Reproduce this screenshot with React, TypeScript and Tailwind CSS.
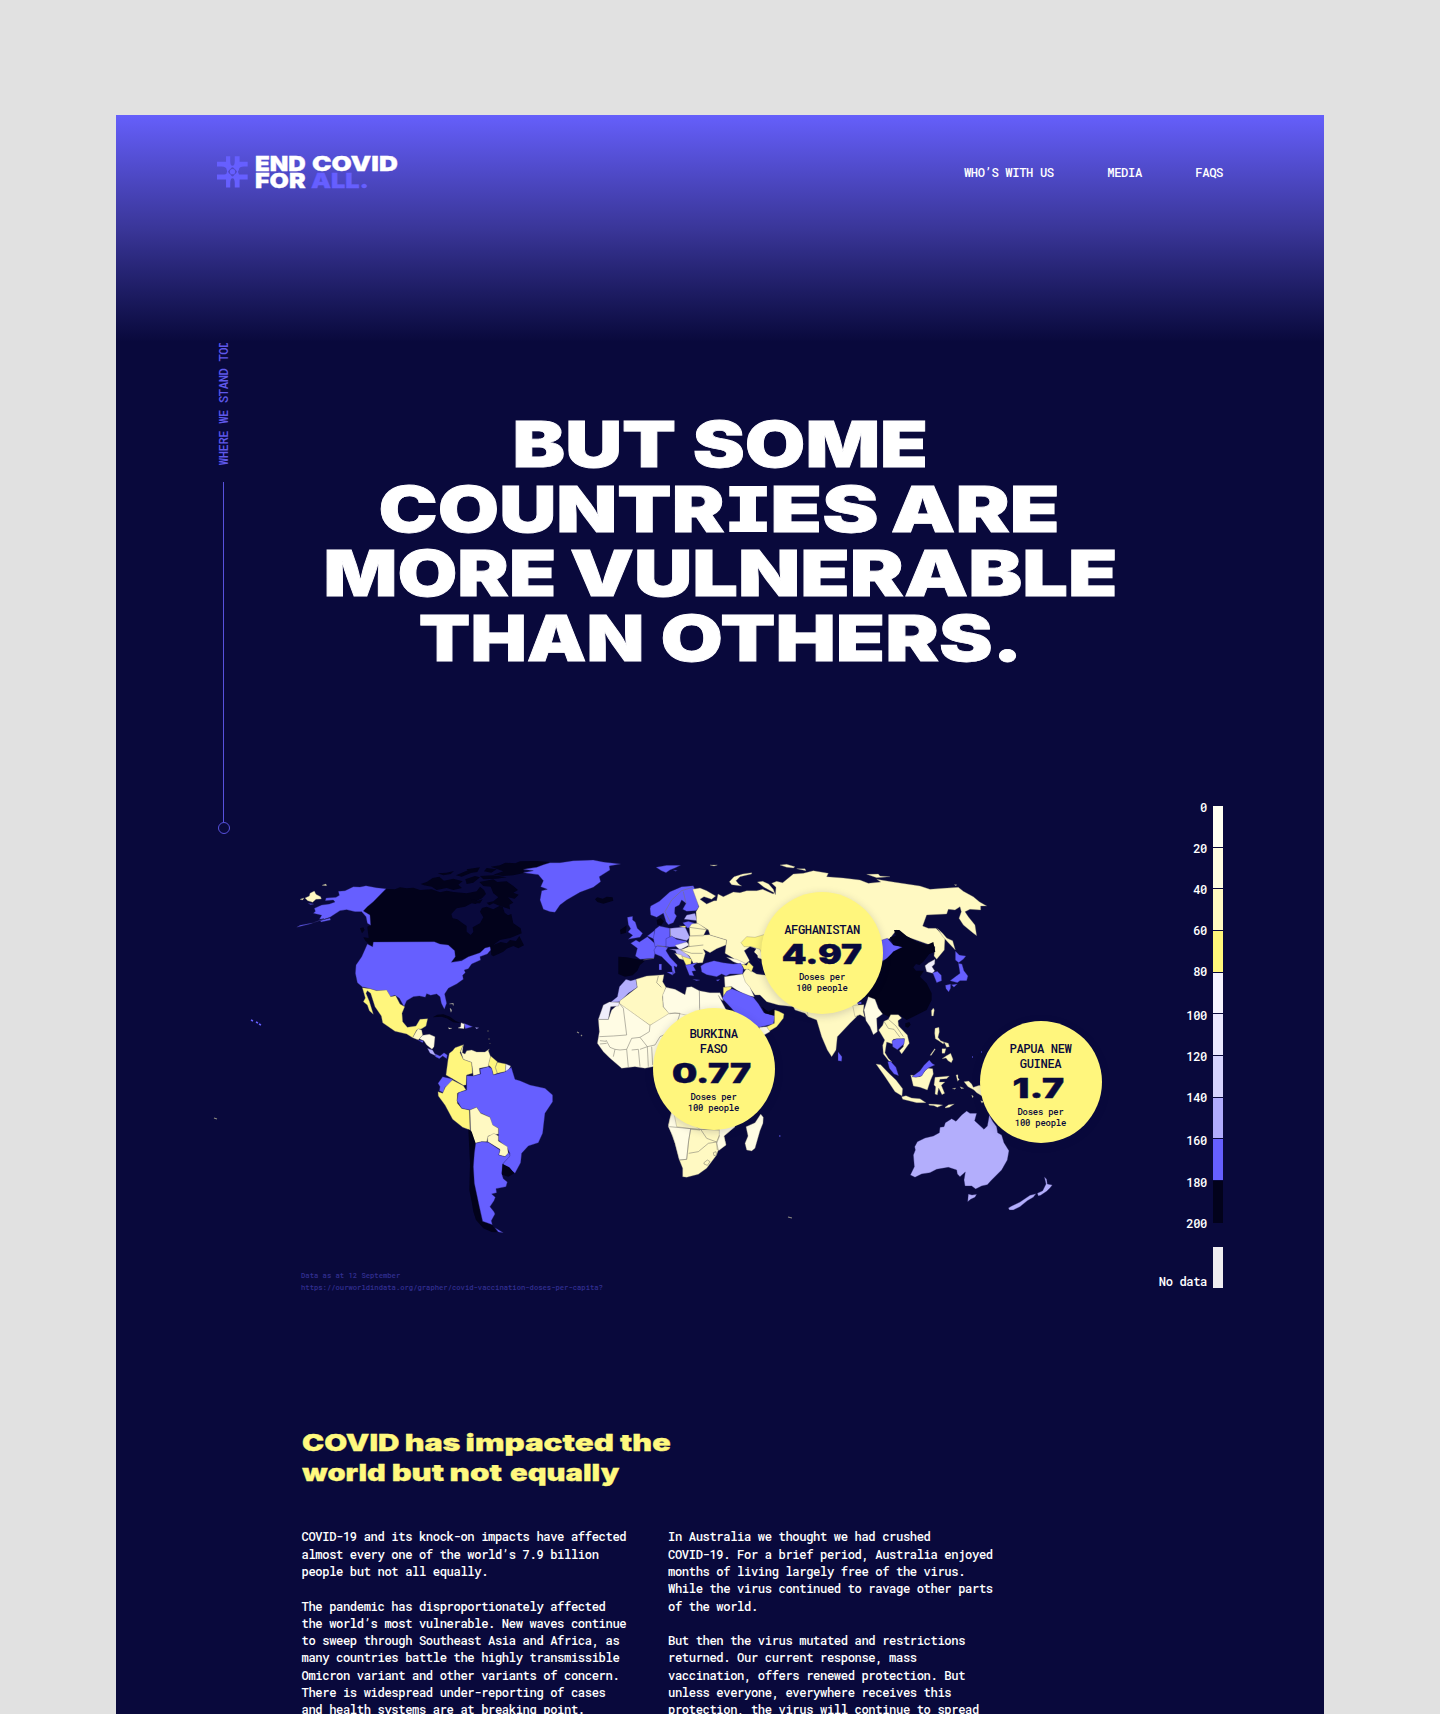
import { useLayoutEffect, useRef } from "react";

const BLUE = "#665fff";
const YELLOW = "#fff67d";
const LIGHT = "#fff9c2";
const PALE = "#fffce4";
const LAV = "#b3aefc";
const MIST = "#efedfb";
const INK = "#02021b";

type Shape = [fill: string, d: string];

/** Stretches its text horizontally so that the ink fills the box width. */
function Fit({ text, className }: { text: string; className: string }) {
  const inner = useRef<HTMLSpanElement>(null);
  useLayoutEffect(() => {
    const el = inner.current;
    if (!el || !el.parentElement) return;
    const ctx = document.createElement("canvas").getContext("2d");
    if (!ctx) return;
    const cs = getComputedStyle(el);
    ctx.font = `${cs.fontWeight} ${cs.fontSize} ${cs.fontFamily}`;
    const m = ctx.measureText(text);
    const ink = m.actualBoundingBoxRight + m.actualBoundingBoxLeft;
    const k = el.parentElement.getBoundingClientRect().width / ink;
    el.style.transform = `translateX(${m.actualBoundingBoxLeft * k}px) scaleX(${k})`;
  }, [text]);
  return (
    <span className={`block shrink-0 text-left whitespace-nowrap ${className}`}>
      <span ref={inner} className="inline-block origin-left">
        {text}
      </span>
    </span>
  );
}

const northAmerica: Shape[] = [
  [INK, "M320 147L345 148L360 142L380 145L400 143L420 150L455 148L480 157L500 152L520 156L560 160L590 154L600 140L612 150L618 162L606 175L585 185L590 192L575 190L555 200L530 205L514 222L518 235L532 238L548 250L560 258L560 275L572 285L580 276L578 262L600 250L610 232L600 215L606 204L620 200L640 208L658 198L668 200L674 218L684 226L694 222L700 250L722 265L725 280L700 290L690 294L660 300L640 315L662 306L680 310L690 300L708 303L718 288L732 316L715 325L700 318L680 326L670 335L640 349L634 345L632 322L615 324L600 337L570 350L514 367L526 350L524 330L505 315L480 312L463 305L280 305L276 320L256 302L250 292L266 294L262 260L272 255L268 225L245 213Z"],
  [INK, "M422 132L440 126L458 114L478 110L492 122L520 116L548 124L535 134L546 144L520 150L500 144L470 150L455 140L432 136Z"],
  [INK, "M598 126L640 118L652 126L680 124L700 138L714 150L700 158L716 164L704 176L684 172L700 188L688 194L690 208L660 198L640 190L628 196L620 188L640 184L655 172L640 160L632 140L610 138Z"],
  [INK, "M632 80L660 76L676 68L706 70L720 64L770 63L810 66L780 80L745 84L730 92L735 98L700 106L668 108L640 104L670 94Z"],
  [INK, "M473 100L500 98L522 93L512 102L490 106Z M528 106L560 92L575 98L545 110Z M560 88L600 82L592 96L566 100Z M556 118L585 108L600 112L580 128L560 132Z M600 108L640 106L680 112L650 116L610 118Z M620 84L650 88L634 98L612 94Z M572 176L592 182L608 178L600 190L580 190Z M240 265L250 262L254 270L246 280Z"],
  [INK, "M458 532L472 524L490 523L510 530L526 542L543 550L520 547L500 535L484 530Z"],
  [BLUE, "M318 146L290 143L258 137L240 141L220 140L195 152L175 154L178 166L168 172L138 174L136 182L160 180L165 186L148 192L125 195L103 205L106 214L100 220L125 226L118 238L132 236L90 252L50 262L60 256L100 248L150 232L165 222L180 212L200 209L225 215L245 215L258 230L262 250L272 256L270 225L250 213L262 200L280 185Z M84 190L102 192L92 194Z M120 242L150 234L152 240L124 246Z"],
  [LIGHT, "M75 174L88 168L90 160L103 153L108 163L122 170L124 177L108 178L98 187L83 182Z M126 136L138 132L140 137Z M60 178L72 174L68 180Z"],
  [BLUE, "M262 312L278 320L280 306L463 305L480 312L505 315L524 332L526 350L514 367L545 362L565 350L600 338L615 324L630 320L632 330L622 342L600 350L602 360L575 372L565 386L553 390L556 398L548 406L550 418L530 432L505 445L494 462L500 490L493 508L484 490L480 470L470 462L452 466L440 461L436 472L418 468L400 470L380 482L372 500L358 475L345 466L330 470L320 452L290 452L262 444L247 441L232 428L226 400L228 375L245 350Z"],
  [YELLOW, "M247 443L270 446L290 452L320 450L332 470L347 467L360 492L374 500L366 520L368 545L382 562L408 558L420 538L443 536L438 558L425 566L410 570L398 593L380 582L345 574L308 548L304 528L285 500L272 460L262 452L258 460L268 484L280 523L268 512L262 495L250 485L256 474Z"],
  [LIGHT, "M398 593L408 575L414 566L425 570L428 585L415 600Z"],
  [PALE, "M418 596L428 586L448 583L465 590L462 620L456 628L440 615L432 603Z"],
  [BLUE, "M413 600L430 602L428 608Z M462 640L480 648L492 638L502 645L500 656L488 648L478 656L466 650Z M552 550L578 560L556 566Z"],
  [LAV, "M442 625L458 630L468 648L450 640Z M585 562L597 563L590 567Z"],
  [PALE, "M534 564L542 560L543 548L553 552L552 566Z M504 563L516 565L508 567Z M508 492L520 490L520 497L518 492Z M510 504L515 510L513 517Z"],
];

const southAmerica: Shape[] = [
  [YELLOW, "M130 44L105 53L98 62L88 70L84 90L78 135L95 145L130 166L138 165L140 135L157 130L155 97L130 88L120 68Z"],
  [LIGHT, "M130 44L122 64L130 88L155 97L160 138L180 132L178 115L205 110L212 80L205 62L208 57L195 66L170 66L155 60L140 62L135 72L127 68Z"],
  [YELLOW, "M212 78L232 95L226 112L232 130L220 135L213 112L205 105Z M232 97L258 102L256 125L232 130L226 112Z"],
  [MIST, "M258 102L272 108L264 125L256 123Z"],
  [BLUE, "M68 140L97 147L94 160L75 172L70 188L58 182L60 170L54 160Z"],
  [YELLOW, "M54 185L68 190L76 172L97 150L130 167L138 180L112 190L112 220L125 235L148 240L150 300L128 292L98 268L75 225L55 198Z"],
  [BLUE, "M140 137L160 138L182 132L180 117L205 110L215 115L220 135L256 125L274 112L285 148L300 152L330 165L375 175L398 195L398 215L375 250L368 310L355 338L325 348L305 370L302 398L285 430L248 402L270 372L262 355L235 330L235 295L215 285L210 262L180 248L170 232L150 240L125 235L111 212L115 188L140 180Z"],
  [LIGHT, "M150 240L170 232L182 250L210 262L218 285L235 295L235 312L205 318L200 335L185 335L165 340L152 300Z"],
  [LIGHT, "M203 320L222 310L235 318L235 333L262 350L265 372L255 380L236 375L240 358L203 335Z"],
  [INK, "M145 298L155 305L167 340L163 440L178 530L186 575L215 583L232 607L215 606L190 595L168 570L160 545L155 515L148 480L150 400Z"],
  [BLUE, "M167 340L185 335L205 337L240 360L236 375L255 380L268 366L270 378L248 402L245 430L250 446L262 456L258 470L228 476L230 488L215 492L226 502L222 512L210 530L222 545L225 552L214 572L217 584L188 574L178 530L163 460L160 410L163 370Z M225 593L250 608L235 606Z"],
  [INK, "M248 402L268 412L283 430L265 440L246 434Z"],
];

const eurasia: Shape[] = [
  [BLUE, "M-110 58L-70 52L-50 44L-30 38L0 38L40 32L100 30L130 36L182 42L148 48L150 60L118 80L122 95L100 112L60 127L20 150L0 165L-15 187L-30 185L-50 178L-60 150L-55 122L-38 118L-58 110L-50 92L-65 74L-110 68L-80 62Z"],
  [INK, "M105 148L112 142L128 146L140 140L158 142L160 152L130 161L112 156Z M180 240L200 226L198 248L182 253Z M290 210L302 204L312 214L304 226L292 224Z"],
  [BLUE, "M288 52L320 46L362 46L345 54L330 60L318 68L304 62Z M340 60L352 62L346 64Z"],
  [BLUE, "M202 202L218 199L218 210L226 216L232 235L248 250L240 262L205 268L218 256L204 246L212 236L205 224Z"],
  [BLUE, "M270 176L272 168L298 154L330 125L365 110L400 107L405 118L412 150L417 172L408 182L380 184L368 178L378 160L365 150L358 165L345 172L344 190L350 198L340 218L325 224L318 215L310 190L290 202L272 195Z"],
  [BLUE, "M228 270L238 276L262 260L290 285L282 325L240 328L226 318L232 295L212 280Z M262 258L285 240L283 268Z"],
  [INK, "M175 320L200 322L255 332L240 345L232 362L218 376L195 380L175 372Z"],
  [BLUE, "M285 238L298 228L330 235L330 265L318 290L285 290L280 265Z"],
  [LAV, "M330 235L375 230L390 262L380 272L330 260Z M380 195L405 190L412 212L372 208Z"],
  [BLUE, "M368 218L385 214L405 220L398 232L382 234Z"],
  [BLUE, "M318 266L335 258L350 268L380 274L375 282L345 290L318 292Z M282 300L290 288L325 290L318 302L330 322L352 345L350 352L342 348L346 368L338 374L335 350L305 320L285 312Z M320 366L342 366L338 376Z M297 342L305 342L305 360L297 360Z"],
  [MIST, "M345 286L380 276L388 285L360 300Z"],
  [LAV, "M328 297L370 298L392 325L380 332L350 312L346 302Z"],
  [LIGHT, "M344 310L365 315L372 330L358 326Z M388 232L395 222L415 219L440 238L430 258L390 258Z M388 258L448 254L500 270L498 285L470 296L450 308L430 298L436 310L428 338L400 340L388 318L362 300L385 290Z"],
  [YELLOW, "M365 318L395 328L392 345L378 345Z M358 228L378 228L375 233Z"],
  [BLUE, "M376 346L412 338L400 348L408 362L396 364L402 378L388 376Z M398 388L420 390L410 392Z M468 390L480 388L474 394Z"],
  [LIGHT, "M398 118L420 114L440 122L467 138L455 148L432 140L420 148L440 162L462 152L470 152L474 132L490 140L520 126L540 128L560 122L590 122L608 118L640 132L642 128L612 112L592 96L608 94L626 102L640 118L646 134L648 112L635 100L650 94L668 98L700 72L730 70L760 62L805 70L800 80L850 84L900 90L925 100L962 96L950 88L1000 96L1080 108L1110 118L1150 115L1195 112L1210 124L1240 140L1258 155L1280 168L1262 168L1262 180L1230 178L1215 185L1225 200L1245 225L1250 257L1238 248L1210 225L1197 205L1204 185L1200 170L1185 180L1165 178L1160 192L1100 195L1088 228L1105 235L1128 235L1155 262L1153 300L1130 328L1122 318L1125 290L1040 260L1010 240L990 265L900 300L640 340L585 320L545 350L520 325L495 310L500 270L450 255L445 240L410 218L408 185L417 170Z"],
  [LIGHT, "M508 95L522 80L548 72L575 68L575 72L540 80L528 92L536 102L545 108L515 104Z M450 45L472 45L462 48Z M660 45L680 43L705 50L700 54L680 52Z M710 56L735 56L738 62Z M920 73L955 72L960 78L990 80L950 83Z M1183 104L1190 104L1188 107Z M1132 235L1148 250L1160 264L1178 272L1186 300L1165 278L1150 262Z"],
  [YELLOW, "M543 278L560 260L585 262L625 250L660 240L660 330L608 318L600 298L575 290L552 290Z"],
  [PALE, "M500 322L530 328L556 340L545 345L520 335Z"],
  [LIGHT, "M548 372L560 355L590 372L615 375L660 400L740 440L800 480L745 500L735 490L705 480L700 470L655 465L620 455L600 435L585 435L570 415L550 395Z"],
  ["#09093c", "M553 302L570 290L588 296L582 306L592 316L594 330L606 340L607 372L585 366L575 352L568 330Z"],
  [YELLOW, "M545 343L560 346L566 336L580 350L574 366L566 358L552 358Z"],
  [BLUE, "M422 348L435 340L462 332L490 338L520 342L542 340L550 355L548 372L510 372L498 378L485 372L470 380L440 374L425 366Z"],
  [PALE, "M493 380L548 372L556 396L570 412L583 440L560 438L530 420L515 410L495 412Z"],
  [YELLOW, "M490 412L515 410L512 420L505 438L490 440Z"],
  [BLUE, "M500 424L516 416L550 430L580 442L596 462L612 488L645 498L640 522L598 532L560 525L510 470L486 445Z"],
  [INK, "M606 470L625 485L645 475L640 496L615 490Z"],
  [YELLOW, "M644 480L656 484L672 492L670 505L650 530L625 545L620 530L643 520Z"],
  [PALE, "M598 532L620 530L630 545L600 562Z"],
  [BLUE, "M960 272L982 265L1000 285L1028 290L1000 305L990 322L968 332L955 330Z"],
  [INK, "M1002 240L1018 240L1040 258L1070 275L1100 285L1120 276L1126 305L1108 312L1090 335L1078 345L1068 342L1060 352L1068 362L1092 362L1080 380L1100 400L1115 430L1115 450L1100 480L1060 500L1040 510L1020 496L1000 495L990 502L965 490L950 455L925 440L880 440L880 330L970 335L1000 305L1030 292L1000 285L990 262L1008 258Z M1036 520L1048 516L1052 524L1044 533L1036 530Z"],
  [MIST, "M1095 347L1106 338L1125 328L1124 342L1116 350L1124 362L1118 370L1100 365Z"],
  [BLUE, "M1118 368L1132 364L1144 376L1145 392L1130 398Z M1186 303L1198 315L1218 318L1210 328L1196 338L1186 330Z M1195 340L1206 342L1212 362L1224 378L1220 392L1200 392L1192 398L1170 392L1186 380L1200 370Z M1156 406L1172 402L1172 415L1166 426L1158 416Z M1174 404L1192 402L1182 412Z"],
  [LIGHT, "M740 480L745 500L770 510L785 560L802 600L815 620L828 600L832 560L870 520L890 500L895 460L860 440Z"],
  [LIGHT, "M878 466L912 464L910 485L914 502L900 494L885 500Z"],
  [BLUE, "M892 458L904 455L904 462L894 462Z M834 605L846 620L845 634L834 632Z"],
  [PALE, "M925 440L945 448L955 475L968 492L950 505L952 545L940 554L930 530L918 512L912 480Z"],
];

const africa: Shape[] = [
  [PALE, "M115 508L145 508L155 480L180 458L270 525L330 480L480 470L540 540L500 640L290 648L255 655L225 650L185 655L150 625L130 605L112 580L118 545Z"],
  [LAV, "M198 388L212 392L228 388L232 412L205 430L180 455L150 458L172 440L178 410Z"],
  [MIST, "M130 465L148 456L178 457L176 468L152 470L145 508L115 508Z"],
  [LIGHT, "M228 388L260 378L312 374L308 395L318 412L308 440L310 470L328 490L270 526L178 460L180 452L232 412Z"],
  [PALE, "M318 412L345 418L375 434L380 412L395 410L418 422L420 500L400 500L345 488L328 492L310 470L308 435Z"],
  [PALE, "M418 422L450 428L480 428L490 452L482 448L475 436L520 520L420 520Z"],
];

const africaBorders =
  "M178 460L190 475L200 555L160 558L118 560 M270 526L268 545L240 562L215 565L200 598 M328 490L360 490L345 540L300 560 M120 572L138 574 M120 582L140 580 M138 570L150 592L165 598L160 620 M200 598L180 600L165 598 M215 600L235 598L240 650 M200 598L205 652 M240 598L262 590 M262 590L265 650 M275 590L278 645 M240 562L262 590L285 585L300 560 M295 378L290 398L304 412";

const europeBorders =
  "M330 215L315 185L335 150L365 122L398 112 M378 160L370 125 M290 285L318 292 M330 235L332 262 M388 232L445 240 M385 290L430 285 M362 300L395 310L428 310 M385 272L388 290 M250 330L282 325";

const southeastAsia: Shape[] = [
  [LIGHT, "M176 150L188 136L192 124L205 118L212 104L235 104L245 114L234 122L236 138L262 165L268 190L245 222L238 212L250 200L252 176L220 178L218 192L200 186L195 218L205 235L216 246L206 242L190 222L188 196L194 180Z"],
  [BLUE, "M216 182L230 176L254 176L252 192L232 209L218 200Z M203 245L212 244L228 262L236 287L222 282L208 265Z"],
  [LIGHT, "M168 252L182 254L205 278L228 300L248 326L246 348L225 335L195 290Z M245 350L258 347L275 354L300 356L318 368L290 368L248 358Z M326 372L348 373L368 375L352 382L342 377L328 376Z M375 382L386 374L403 372L388 382L377 384Z"],
  [LIGHT, "M272 285L300 290L322 264L338 266L340 282L332 300L322 330L300 322L280 318Z"],
  [BLUE, "M276 290L300 272L312 256L328 240L336 250L345 255L325 264L315 272L305 288L288 292Z"],
  [LIGHT, "M345 292L365 290L388 288L380 296L360 298L358 306L375 306L364 316L374 340L366 344L356 324L352 345L345 342L347 320L342 315Z M408 285L414 284L414 294L418 298L413 304Z M420 320L432 325L424 326Z M397 326L408 324L404 328Z M432 305L446 303L455 312L460 322L478 316L486 320L492 352L470 338L462 330L444 320Z M455 346L460 348L458 354Z M482 362L490 364L486 370Z"],
  [LIGHT, "M345 145L357 142L358 156L354 172L362 182L372 186L370 192L356 182L346 176L344 160Z M372 186L385 190L388 200L380 202Z M366 206L378 206L374 220L366 220Z M366 236L378 228L392 220L399 238L394 248L384 242L378 234Z M330 226L344 206L346 208L334 226Z"],
  [LIGHT, "M334 92L340 84L343 90L340 108L335 108Z"],
  [LAV, "M425 405L440 393L450 400L470 400L464 422L492 448L502 438L508 405L518 424L530 440L533 458L545 465L552 488L567 512L562 540L545 570L515 600L502 614L485 618L467 627L455 618L435 618L432 600L436 576L420 590L412 582L410 570L385 562L350 568L330 578L305 582L285 592L271 585L283 560L280 525L286 510L284 500L292 485L315 474L340 468L358 458L360 442L372 440L376 428L395 416L408 424Z M445 642L456 645L470 643L465 652L452 658L443 665Z M673 590L680 598L682 612L697 615L690 624L680 634L662 646L655 648L652 640L668 632L678 612Z M565 684L575 678L600 666L630 646L648 641L640 652L622 662L600 680L580 690L568 690Z"],
];

const southernAfrica: Shape[] = [
  [LIGHT, "M98 380L85 435L105 490L118 540L128 565L128 590L140 592L175 583L200 565L230 525L235 510L258 495L252 468L285 440L290 380Z"],
  [PALE, "M98 390L90 415L85 440L98 468L105 490L118 540L140 538L142 518L146 482L152 448L180 450L110 440L98 380L290 380L285 440L252 468L258 495L236 512L230 490L238 470L238 448L180 448Z"],
  [PALE, "M362 402L370 412L369 430L360 452L345 505L335 513L320 510L315 490L324 468L318 440L345 428Z"],
];

function Region({ at, shapes, lines }: { at: string; shapes: Shape[]; lines?: string }) {
  return (
    <g transform={`translate(${at}) scale(0.33333)`}>
      {shapes.map(([fill, d], i) => (
        <path
          key={i}
          d={d}
          fill={fill}
          stroke={fill === LIGHT || fill === PALE || fill === YELLOW || fill === MIST ? "#7d7a70" : "#23215f"}
          strokeWidth={fill === INK ? 0 : 1}
          strokeLinejoin="round"
        />
      ))}
      {lines && <path d={lines} fill="none" stroke="#77756e" strokeWidth="1.6" />}
    </g>
  );
}

function WorldMap() {
  return (
    <svg viewBox="301 840 838 420" className="block h-[420px] w-[838px] overflow-visible">
      <Region at="280 840" shapes={northAmerica} />
      <Region at="420 1030" shapes={southAmerica} />
      <Region at="560 850" shapes={eurasia} lines={europeBorders} />
      <Region at="560 850" shapes={africa} lines={africaBorders} />
      <Region
        at="640 980"
        shapes={southernAfrica}
        lines="M88 440L152 446L182 448L238 450 M152 446L146 482L142 520L140 538L118 540 M146 520L175 515L205 490L230 486 M182 448L200 475L230 486L238 466 M230 486L232 510 M192 548L202 540L210 545L202 556L192 552Z M220 518L228 515L230 525L222 527Z"
      />
      <Region
        at="820 980"
        shapes={southeastAsia}
        lines="M192 124L205 145L222 148L240 172 M205 118L228 138L250 170"
      />
      <path d="M251 1020l2 1M256 1022l2 1M259 1024l2 1" stroke={BLUE} strokeWidth="1.4" />
      <path d="M214 1118l3 1M788 1217l4 1M577 1032l2 1M581 1035l1 1" stroke="#8d8a80" strokeWidth="1.2" />
      <path d="M488 1030v2M489 1038v2M490 1043v1" stroke="#4c4a52" strokeWidth="1" />
      <path d="M779 1136h1.500M972 1057h1M981 1052h1" stroke={BLUE} strokeWidth="1" />
    </svg>
  );
}

function Bubble({
  place,
  name,
  value,
  valueClass,
}: {
  place: string;
  name: string[];
  value: string;
  valueClass: string;
}) {
  return (
    <div
      className={`absolute flex size-[122px] flex-col items-center rounded-full bg-[#fff67d] text-center text-[#09093c] shadow-[0_2px_8px_rgba(9,9,60,0.18)] ${place}`}
    >
      <div className="text-[12.2px] leading-[14.3px] tracking-[-0.43px]">
        {name.map((n) => (
          <div key={n} className="whitespace-nowrap">{n}</div>
        ))}
      </div>
      <Fit
        text={value}
        className={`h-[27px] font-[Inter] text-[27px] leading-[27px] font-black [-webkit-text-stroke:0.4px] ${valueClass}`}
      />
      <div className="text-[8.9px] leading-[11px] tracking-[-0.2px]">
        Doses per
        <br />
        100 people
      </div>
    </div>
  );
}

const legend = [
  { label: "0", row: "h-[41.2px]" },
  { label: "20", row: "h-[41.2px]" },
  { label: "40", row: "h-[41.2px]" },
  { label: "60", row: "h-[41.2px]" },
  { label: "80", row: "h-[43.4px]" },
  { label: "100", row: "h-[41.2px]" },
  { label: "120", row: "h-[41.2px]" },
  { label: "140", row: "h-[43.4px]" },
  { label: "160", row: "h-[41.2px]" },
  { label: "180", row: "h-[41.2px]" },
  { label: "200", row: "h-[16px]" },
];

const swatches = [
  "bg-[#fffff2]",
  "bg-[#fffde0]",
  "bg-[#fff9c0]",
  "bg-[#fff67a]",
  "bg-[#f6f4ff]",
  "bg-[#ebe8ff]",
  "bg-[#d6d3fe]",
  "bg-[#b0abfd]",
  "bg-[#665fff]",
];

function Legend() {
  return (
    <div className="mt-[464px] flex w-[84px] shrink-0 flex-col text-[12.2px] leading-[16px] tracking-[-0.42px] text-white">
      <div className="flex justify-end gap-[6px]">
        <div className="-mt-[7.500px] text-right">
          {legend.map(({ label, row }) => (
            <div key={label} className={row}>{label}</div>
          ))}
        </div>
        <div className="flex w-[10px] flex-col">
          {swatches.map((c) => (
            <div key={c} className={`h-[41.67px] border-b border-[#09093c] ${c}`} />
          ))}
          <div className="h-[41.67px] bg-[#02021b]" />
        </div>
      </div>
      <div className="mt-[16px] flex items-end justify-end gap-[6px]">
        <div className="-mb-[1px] whitespace-nowrap">No data</div>
        <div className="h-[41px] w-[10px] bg-[#efedf0]" />
      </div>
    </div>
  );
}

function Logo() {
  return (
    <div className="flex">
      <svg viewBox="0 0 96 98" className="mr-[7px] h-[32px] w-[31px]" fill={BLUE}>
        <path
          fillRule="evenodd"
          d="M28 0h13v14q0 16 7 16t7-16V0h15v17h25v15H84q-16 0-16 9q0 2-2 4q-2 3 0 7q2 2 2 5h27v15H70v25H55V84q0-16-7-16t-7 16v13H28V72H0V57h16q14 0 14-5q0-2 1-4q1-2-1-5q0-11-16-11H0V17h28Z"
        />
        <path fill="#5049c8" d="M48 34q4 0 6 5q5 3 8 9q-3 7-8 9q-3 6-6 6t-6-6q-5-2-8-9q3-6 8-9q2-5 6-5Z" />
        <circle cx="48" cy="48" r="8" />
      </svg>
      <div className="font-[Inter] text-[20.5px] leading-[16.5px] font-black text-white [-webkit-text-stroke:0.3px]">
        <div className="flex">
          <Fit text="END" className="w-[51px]" />
          <Fit text="COVID" className="ml-[6px] w-[86px]" />
        </div>
        <div className="flex">
          <Fit text="FOR" className="w-[51px]" />
          <Fit text="ALL." className="ml-[5px] w-[56px] text-[#665fff]" />
        </div>
      </div>
    </div>
  );
}

const leftColumn = [
  ["COVID-19 and its knock-on impacts have affected", "almost every one of the world’s 7.9 billion", "people but not all equally."],
  [
    "The pandemic has disproportionately affected",
    "the world’s most vulnerable. New waves continue",
    "to sweep through Southeast Asia and Africa, as",
    "many countries battle the highly transmissible",
    "Omicron variant and other variants of concern.",
    "There is widespread under-reporting of cases",
    "and health systems are at breaking point.",
  ],
];

const rightColumn = [
  [
    "In Australia we thought we had crushed",
    "COVID-19. For a brief period, Australia enjoyed",
    "months of living largely free of the virus.",
    "While the virus continued to ravage other parts",
    "of the world.",
  ],
  [
    "But then the virus mutated and restrictions",
    "returned. Our current response, mass",
    "vaccination, offers renewed protection. But",
    "unless everyone, everywhere receives this",
    "protection, the virus will continue to spread",
  ],
];

function Column({ paragraphs }: { paragraphs: string[][] }) {
  return (
    <div className="flex w-[366.500px] shrink-0 flex-col gap-[17.27px] text-[12.2px] leading-[17.27px] tracking-[-0.405px] whitespace-nowrap text-white">
      {paragraphs.map((lines) => (
        <p key={lines[0]}>
          {lines.map((l) => (
            <span key={l} className="block">{l}</span>
          ))}
        </p>
      ))}
    </div>
  );
}

export default function App() {
  return (
    <div className="h-[1714px] w-[1440px] overflow-hidden bg-[#e1e1e1] px-[116px] pt-[115px] font-['Roboto_Mono','DejaVu_Sans_Mono',monospace] font-medium">
      <main className="h-[1599px] overflow-hidden bg-[#09093c]">
        <header className="flex h-[227px] items-start justify-between bg-linear-to-b from-[#655ffb] via-[#3a3699] via-50% to-[#09093c] pr-[101px] pl-[101px]">
          <div className="pt-[41px]">
            <Logo />
          </div>
          <nav className="flex gap-[53.500px] pt-[49px] text-[12.2px] leading-[17px] tracking-[-0.4px] text-white">
            <a>WHO’S WITH US</a>
            <a>MEDIA</a>
            <a>FAQS</a>
          </nav>
        </header>

        <div className="flex pl-[96px]">
          <aside className="flex w-[24px] shrink-0 flex-col items-center">
            <div className="mt-[1px] mr-[2px] flex h-[122px] w-[17px] items-end overflow-hidden">
              <div className="rotate-180 text-[12.2px] leading-[17px] tracking-[-0.4px] whitespace-nowrap text-[#5f58ea] [writing-mode:vertical-rl]">
                WHERE WE STAND TODAY
              </div>
            </div>
            <div className="mt-[17px] mr-[1px] h-[340px] w-px bg-[#5751dd]" />
            <div className="size-[12px] rounded-full border border-[#5751dd]" />
          </aside>

          <section className="ml-[65px] w-[838px] shrink-0">
            <h1 className="mt-[70px] font-[Inter] text-[63.8px] leading-[64.7px] font-black text-white [-webkit-text-stroke:0.8px]">
              <span className="flex h-[64.7px] gap-[18.3px] pl-[214.4px]">
                <Fit text="BUT" className="w-[160.1px]" />
                <Fit text="SOME" className="w-[231.4px]" />
              </span>
              <span className="flex h-[64.7px] gap-[16.1px] pl-[79.9px]">
                <span className="flex">
                  <Fit text="COUNTR" className="w-[342.8px]" />
                  <Fit
                    text="I"
                    className="mr-[7.6px] ml-[7.4px] w-[34.1px] -translate-y-[2px] font-['Roboto_Mono'] text-[60px] font-bold [-webkit-text-stroke:4px]"
                  />
                  <Fit text="ES" className="w-[103.6px]" />
                </span>
                <Fit text="ARE" className="w-[165px]" />
              </span>
              <span className="flex h-[64.7px] gap-[17.6px] pl-[24.7px]">
                <Fit text="MORE" className="w-[227.7px]" />
                <Fit text="VULNERABLE" className="w-[543.8px]" />
              </span>
              <span className="flex h-[64.7px] gap-[21.4px] pl-[119px]">
                <Fit text="THAN" className="w-[221.8px]" />
                <Fit text="OTHERS." className="w-[353.6px]" />
              </span>
            </h1>

            <div className="relative mt-[169.2px]">
              <WorldMap />
              <Bubble
                place="left-[460px] top-[52px] pt-[30.500px]"
                name={["AFGHANISTAN"]}
                value="4.97"
                valueClass="mt-[4px] mb-[3px] w-[79px]"
              />
              <Bubble
                place="left-[351.500px] top-[168px] pt-[18.500px]"
                name={["BURKINA", "FASO"]}
                value="0.77"
                valueClass="mt-[5px] mr-[4px] mb-[4px] w-[79px]"
              />
              <Bubble
                place="left-[678.500px] top-[181px] pt-[20.500px]"
                name={["PAPUA NEW", "GUINEA"]}
                value="1.7"
                valueClass="mt-[5px] mr-[4px] mb-[4px] w-[50px]"
              />
            </div>

            <div className="mt-[9px] text-[7.19px] leading-[12px] whitespace-nowrap text-[#312e90]">
              <div>Data as at 12 September</div>
              <div>https://ourworldindata.org/grapher/covid-vaccination-doses-per-capita?</div>
            </div>

            <h2 className="mt-[135px] font-[Inter] text-[22.7px] leading-[30px] font-black text-[#fff97f] [-webkit-text-stroke:0.3px]">
              <span className="flex h-[30px] gap-[7.2px] pl-[0.500px]">
                <Fit text="COVID" className="w-[97px]" />
                <Fit text="has" className="w-[54px]" />
                <Fit text="impacted" className="w-[146px]" />
                <Fit text="the" className="w-[51px]" />
              </span>
              <span className="flex h-[30px] gap-[7.5px]">
                <Fit text="world" className="w-[84px]" />
                <Fit text="but" className="w-[51px]" />
                <Fit text="not" className="w-[51px]" />
                <Fit text="equally" className="w-[110px]" />
              </span>
            </h2>

            <div className="mt-[40.500px] flex pl-[0.500px]">
              <Column paragraphs={leftColumn} />
              <Column paragraphs={rightColumn} />
            </div>
          </section>

          <Legend />
        </div>
      </main>
    </div>
  );
}
